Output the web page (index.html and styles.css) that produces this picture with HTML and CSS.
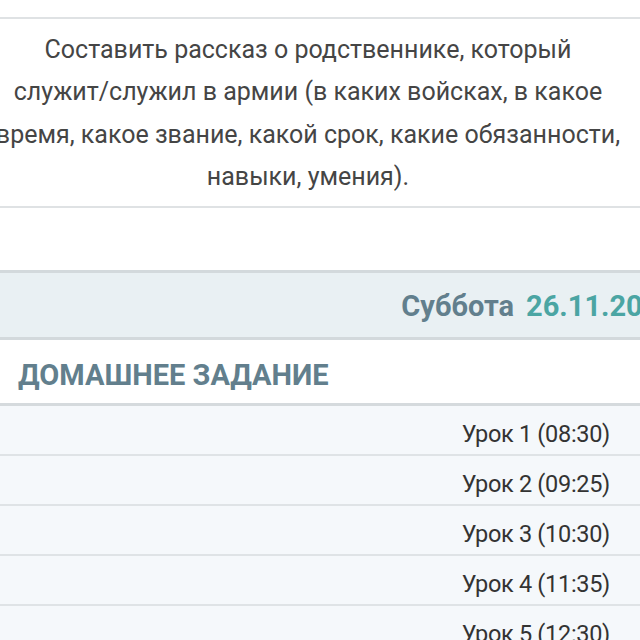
FILE: index.html
```html
<!DOCTYPE html>
<html lang="ru">
<head>
<meta charset="utf-8">
<link rel="stylesheet" href="styles.css">
</head>
<body>
<div class="page">
  <div class="top-space"></div>
  <div class="task-card">
    <p class="task-text">Составить рассказ о родственнике, который<br>служит/служил в армии (в каких войсках, в какое<br>время, какое звание, какой срок, какие обязанности,<br>навыки, умения).</p>
  </div>
  <div class="gap"></div>
  <div class="day-header">
    <span class="day-name">Суббота</span>
    <span class="day-date">26.11.2016</span>
  </div>
  <div class="hw-title">ДОМАШНЕЕ ЗАДАНИЕ</div>
  <ul class="lessons">
    <li class="lesson">Урок 1 (08:30)</li>
    <li class="lesson">Урок 2 (09:25)</li>
    <li class="lesson">Урок 3 (10:30)</li>
    <li class="lesson">Урок 4 (11:35)</li>
    <li class="lesson">Урок 5 (12:30)</li>
  </ul>
</div>
</body>
</html>
```

FILE: styles.css
```css
html, body {
  margin: 0;
  padding: 0;
  background: #ffffff;
  overflow: hidden;
}
body {
  font-family: Roboto, "Liberation Sans", sans-serif;
  width: 640px;
  height: 640px;
}
.page {
  width: 640px;
  overflow: hidden;
}
.top-space {
  height: 17px;
}
.task-card {
  border-top: 2px solid #dfe2e4;
  border-bottom: 2px solid #dfe2e4;
  padding: 10px 0 8px;
}
.task-text {
  margin: 0 0 0 -60px;
  width: 736px;
  text-align: center;
  white-space: nowrap;
  font-size: 25px;
  line-height: 42.3px;
  color: #454545;
}
.gap {
  height: 62px;
}
.day-header {
  display: flex;
  justify-content: flex-end;
  align-items: center;
  gap: 12px;
  width: 700px;
  box-sizing: border-box;
  height: 70px;
  padding: 2px 24px 0 0;
  background: #e9f0f3;
  border-top: 3px solid #d3d9dc;
  border-bottom: 3px solid #d3d9dc;
  white-space: nowrap;
  font-size: 29px;
  font-weight: 700;
}
.day-name {
  color: #627f8d;
}
.day-date {
  color: #4ba5a3;
}
.hw-title {
  height: 57px;
  padding: 6px 0 0 18px;
  display: flex;
  align-items: center;
  font-size: 29px;
  font-weight: 700;
  color: #627f8d;
  border-bottom: 3px solid #d5dadd;
}
.lessons {
  list-style: none;
  margin: 0;
  padding: 0;
}
.lesson {
  height: 40px;
  padding: 8px 30px 0 0;
  display: flex;
  align-items: center;
  justify-content: flex-end;
  background: #f5f8fb;
  border-bottom: 2px solid #dfe3e6;
  font-size: 23.5px;
  color: #333333;
  letter-spacing: -0.3px;
}
```
